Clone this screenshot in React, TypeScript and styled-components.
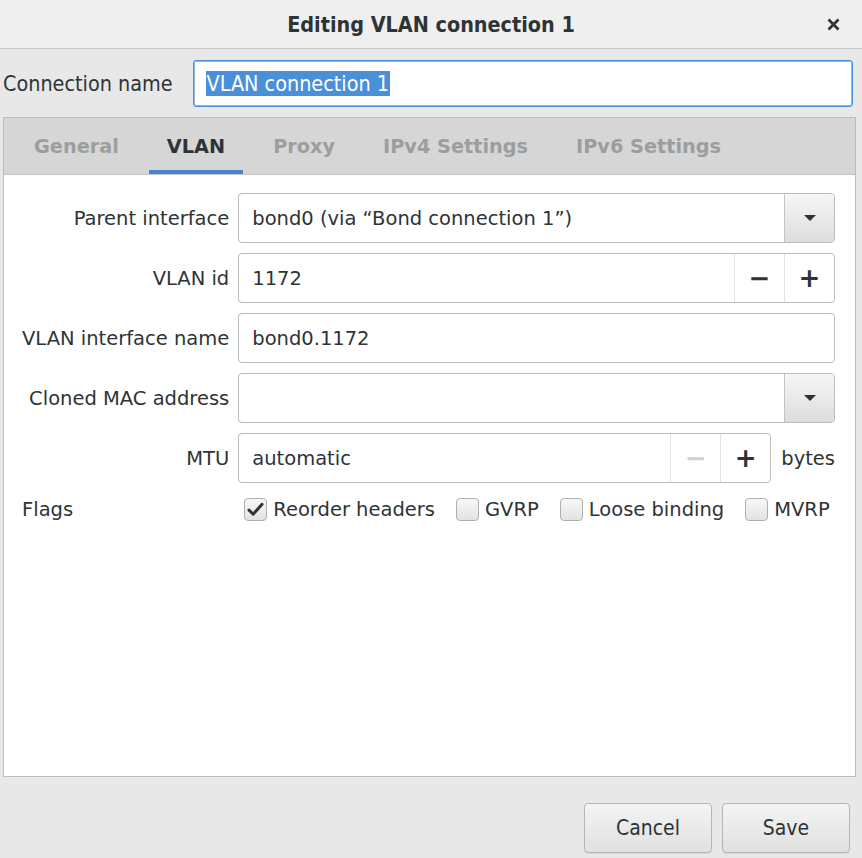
import { createGlobalStyle } from "styled-components";
import styled from "styled-components";

const GlobalStyle = createGlobalStyle`
  html, body {
    margin: 0;
    padding: 0;
    background: #e8e8e8;
  }
  body {
    font-family: "DejaVu Sans", "Liberation Sans", sans-serif;
    color: #2e3436;
  }
`;

const narrow = `"DejaVu Sans Condensed", "Liberation Sans Narrow", "DejaVu Sans", sans-serif`;

const Window = styled.div`
  width: 862px;
  height: 858px;
  display: flex;
  flex-direction: column;
  background: #e8e8e8;
  overflow: hidden;
`;

const TitleBar = styled.div`
  height: 48px;
  flex: none;
  display: flex;
  align-items: center;
  justify-content: center;
  position: relative;
  background: #efefef;
  border-bottom: 1px solid #c9c9c9;
`;

const Title = styled.div`
  font-family: ${narrow};
  font-weight: bold;
  font-size: 21.4px;
  color: #2e3436;
`;

const CloseButton = styled.div`
  position: absolute;
  right: 18px;
  top: 13px;
  width: 22px;
  height: 22px;
  display: flex;
  align-items: center;
  justify-content: center;
`;

const NameRow = styled.div`
  height: 68px;
  flex: none;
  display: flex;
  align-items: center;
  padding: 0 9px 0 3px;
`;

const NameLabel = styled.div`
  font-family: ${narrow};
  font-size: 21.4px;
  color: #2e3436;
  margin-right: 20px;
  white-space: nowrap;
`;

const NameInput = styled.div`
  flex: 1;
  height: 45px;
  border: 1px solid #4a90d9;
  box-shadow: inset 0 0 0 1px #8fb8e6;
  border-radius: 3px;
  background: #fff;
  display: flex;
  align-items: center;
  padding-left: 12px;
  margin-top: 1px;
`;

const Selected = styled.span`
  font-family: ${narrow};
  font-size: 21.4px;
  background: #4a90d9;
  color: #fff;
  line-height: 25px;
  padding: 0 1px;
`;

const Notebook = styled.div`
  flex: 1;
  margin: 0 6px 0 3px;
  border: 1px solid #bcbcbc;
  display: flex;
  flex-direction: column;
  background: #fff;
`;

const TabStrip = styled.div`
  height: 56px;
  flex: none;
  display: flex;
  padding-left: 6px;
  background: #d6d6d6;
  border-bottom: 1px solid #c4c4c4;
`;

const Tab = styled.div<{ $active?: boolean }>`
  margin: 0 6px;
  padding: 0 18px;
  display: flex;
  align-items: center;
  font-weight: bold;
  font-size: 19.3px;
  color: ${(p) => (p.$active ? "#2e3436" : "#9c9e9d")};
  box-shadow: ${(p) => (p.$active ? "inset 0 -4px 0 #4a86cf" : "none")};
  white-space: nowrap;
`;

const Content = styled.div`
  flex: 1;
  padding: 18px 20px 18px 17px;
  display: grid;
  grid-template-columns: auto minmax(0, 1fr);
  column-gap: 9px;
  row-gap: 10px;
  align-content: start;
  font-size: 19.5px;
`;

const Label = styled.div<{ $left?: boolean }>`
  display: flex;
  align-items: center;
  justify-content: ${(p) => (p.$left ? "flex-start" : "flex-end")};
  padding-left: 1px;
  color: #2e3436;
  white-space: nowrap;
`;

const Field = styled.div<{ $grow?: boolean }>`
  height: 48px;
  flex: ${(p) => (p.$grow ? 1 : "none")};
  display: flex;
  align-items: stretch;
  border: 1px solid #bdbdbd;
  border-radius: 4px;
  background: #fff;
  overflow: hidden;
`;

const FieldText = styled.div`
  flex: 1;
  display: flex;
  align-items: center;
  padding-left: 13px;
  color: #2e3436;
  white-space: nowrap;
`;

const DropButton = styled.div`
  width: 49px;
  flex: none;
  display: flex;
  align-items: center;
  justify-content: center;
  border-left: 1px solid #c4c4c4;
  background: linear-gradient(#f6f6f6, #dddddd);
`;

const Arrow = styled.div`
  width: 0;
  height: 0;
  border-left: 6px solid transparent;
  border-right: 6px solid transparent;
  border-top: 6px solid #2e3436;
`;

const SpinButton = styled.div<{ $disabled?: boolean }>`
  width: 49px;
  flex: none;
  display: flex;
  align-items: center;
  justify-content: center;
  border-left: 1px solid #e2e2e2;
  font-size: 26px;
  font-weight: bold;
  color: ${(p) => (p.$disabled ? "#d0d0d0" : "#2e3436")};
`;

const MtuLine = styled.div`
  display: flex;
  align-items: stretch;
  gap: 10px;
`;

const Unit = styled.div`
  display: flex;
  align-items: center;
  color: #2e3436;
`;

const FlagsRow = styled.div`
  display: flex;
  align-items: center;
  padding-left: 6px;
  gap: 21px;
  height: 32px;
`;

const FlagItem = styled.label`
  display: flex;
  align-items: center;
  gap: 6px;
  color: #2e3436;
  white-space: nowrap;
`;

const Box = styled.span`
  width: 21px;
  height: 21px;
  border: 1px solid #b0b0b0;
  border-radius: 4px;
  background: linear-gradient(#f8f8f8, #e2e2e2);
  display: flex;
  align-items: center;
  justify-content: center;
`;

const Footer = styled.div`
  height: 81px;
  flex: none;
  display: flex;
  justify-content: flex-end;
  align-items: flex-start;
  gap: 10px;
  padding: 26px 12px 0 0;
  box-sizing: border-box;
`;

const Button = styled.div`
  width: 126px;
  height: 48px;
  display: flex;
  align-items: center;
  justify-content: center;
  border: 1px solid #b6b6b6;
  border-radius: 4px;
  background: linear-gradient(#f4f4f4, #e0e0e0);
  box-shadow: 0 1px 1px rgba(0, 0, 0, 0.08);
  font-family: ${narrow};
  font-size: 21px;
  color: #2e3436;
`;

function Checkbox({ checked, label }: { checked?: boolean; label: string }) {
  return (
    <FlagItem>
      <Box>
        {checked && (
          <svg width="17" height="15" viewBox="0 0 18 16">
            <path
              d="M2 8.5 L6.5 13 L16 2.5"
              fill="none"
              stroke="#2e3436"
              strokeWidth="3.2"
              strokeLinecap="round"
              strokeLinejoin="round"
            />
          </svg>
        )}
      </Box>
      {label}
    </FlagItem>
  );
}

export default function App() {
  return (
    <Window>
      <GlobalStyle />
      <TitleBar>
        <Title>Editing VLAN connection 1</Title>
        <CloseButton>
          <svg width="13" height="13" viewBox="0 0 13 13">
            <path d="M1.5 1.5 L11.5 11.5 M11.5 1.5 L1.5 11.5" stroke="#2e3436" strokeWidth="2.8" />
          </svg>
        </CloseButton>
      </TitleBar>

      <NameRow>
        <NameLabel>Connection name</NameLabel>
        <NameInput>
          <Selected>VLAN connection 1</Selected>
        </NameInput>
      </NameRow>

      <Notebook>
        <TabStrip>
          <Tab>General</Tab>
          <Tab $active>VLAN</Tab>
          <Tab>Proxy</Tab>
          <Tab>IPv4 Settings</Tab>
          <Tab>IPv6 Settings</Tab>
        </TabStrip>

        <Content>
          <Label>Parent interface</Label>
          <Field>
            <FieldText>bond0 (via “Bond connection 1”)</FieldText>
            <DropButton>
              <Arrow />
            </DropButton>
          </Field>

          <Label>VLAN id</Label>
          <Field>
            <FieldText>1172</FieldText>
            <SpinButton>−</SpinButton>
            <SpinButton>+</SpinButton>
          </Field>

          <Label>VLAN interface name</Label>
          <Field>
            <FieldText>bond0.1172</FieldText>
          </Field>

          <Label>Cloned MAC address</Label>
          <Field>
            <FieldText />
            <DropButton>
              <Arrow />
            </DropButton>
          </Field>

          <Label>MTU</Label>
          <MtuLine>
            <Field $grow>
              <FieldText>automatic</FieldText>
              <SpinButton $disabled>−</SpinButton>
              <SpinButton>+</SpinButton>
            </Field>
            <Unit>bytes</Unit>
          </MtuLine>

          <Label $left>Flags</Label>
          <FlagsRow>
            <Checkbox checked label="Reorder headers" />
            <Checkbox label="GVRP" />
            <Checkbox label="Loose binding" />
            <Checkbox label="MVRP" />
          </FlagsRow>
        </Content>
      </Notebook>

      <Footer>
        <Button>Cancel</Button>
        <Button>Save</Button>
      </Footer>
    </Window>
  );
}
